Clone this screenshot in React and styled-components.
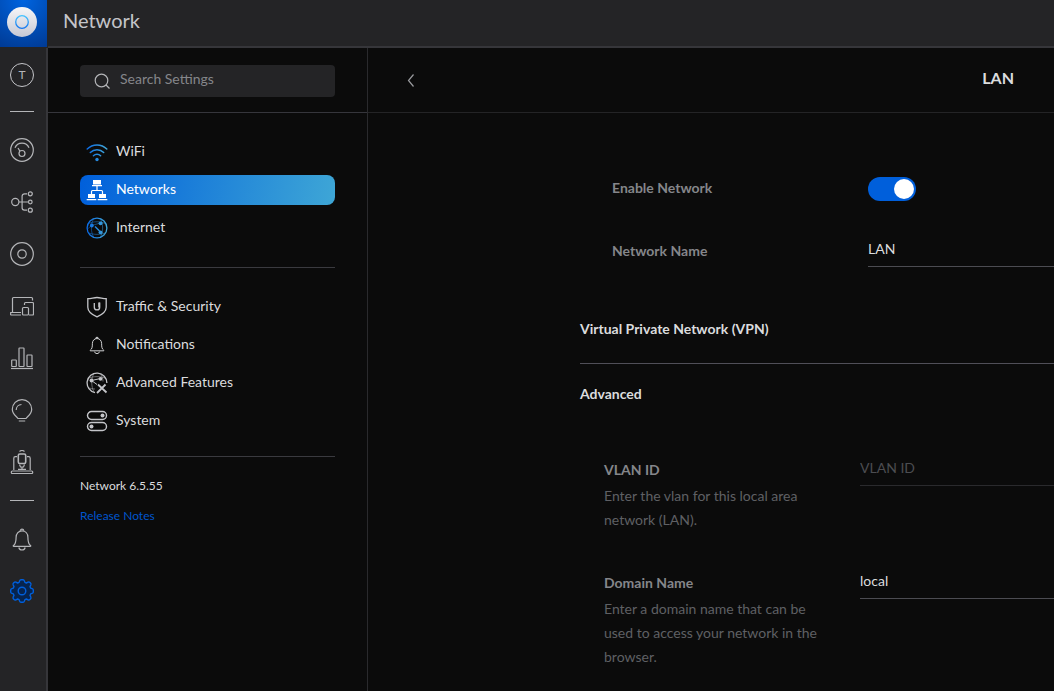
import React, { useState } from 'react';
import styled, { createGlobalStyle, css } from 'styled-components';

const GlobalStyle = createGlobalStyle`
  * {
    box-sizing: border-box;
  }

  body {
    margin: 0;
    background: #0b0b0b;
    color: #dbdcde;
    font-family: Lato, "Open Sans", sans-serif;
    font-size: 14px;
    line-height: 24px;
  }
`

const Page = styled.div`
  display: grid;
  grid-template-columns: 48px 1fr;
  grid-template-rows: 48px 1fr;
  min-height: 100vh;
`

const Brand = styled.a`
  display: flex;
  background: #242426;
`

const BrandTile = styled.span`
  display: flex;
  align-items: center;
  justify-content: center;
  width: 47px;
  height: 47px;
  padding-right: 3px;
  padding-bottom: 3px;
  background: radial-gradient(circle at 50% 0%, #0064e0, #003a94);
`

const TopBar = styled.header`
  display: flex;
  align-items: center;
  padding: 0 15px 6px;
  background: #242426;
  border-bottom: 2px solid #36363a;
`

const AppTitle = styled.h1`
  margin: 0;
  color: #c4c5c9;
  font-size: 20px;
  font-weight: normal;
`

const Rail = styled.nav`
  display: flex;
  flex-direction: column;
  align-items: center;
  padding: 3px 2px 0 0;
  background: #242426;
  border-right: 2px solid #36363a;
`

const RailButton = styled.button`
  display: flex;
  align-items: center;
  justify-content: center;
  width: 44px;
  height: ${props => (props.$short ? '48px' : '52px')};
  padding: 0;
  border: 0;
  background: none;
  color: ${props => (props.$active ? '#005fdb' : '#b4b5b8')};
  cursor: pointer;
`

const Avatar = styled.span`
  width: 24px;
  height: 24px;
  border: 1px solid #c4c5c9;
  border-radius: 50%;
  font-family: Lato, sans-serif;
  font-size: 12px;
  line-height: 22px;
  text-align: center;
`

const RailDivider = styled.hr`
  width: 24px;
  height: 1px;
  margin: 12px 0;
  border: 0;
  background: #b4b5b8;
`

const Body = styled.div`
  display: grid;
  grid-template-columns: 320px 1fr;
  min-width: 0;
`

const Side = styled.aside`
  border-right: 1px solid #2a2a2d;
`

const SearchRow = styled.div`
  height: 65px;
  padding: 17px 32px 0;
  border-bottom: 1px solid #36363c;
`

const SearchBox = styled.label`
  display: flex;
  align-items: center;
  gap: 10px;
  height: 32px;
  padding: 0 14px;
  border-radius: 4px;
  background: #242426;
  color: #b4b5b8;
`

const SearchInput = styled.input`
  flex: 1;
  min-width: 0;
  height: 28px;
  padding: 0 0 6px;
  border: 0;
  outline: 0;
  background: none;
  color: #dbdcde;
  font: inherit;

  &::placeholder {
    color: #85868a;
    opacity: 1;
  }
`

const Menu = styled.nav`
  display: flex;
  flex-direction: column;
  gap: 8px;
  padding: 24px 32px 0;
`

const MenuItem = styled.a`
  display: flex;
  align-items: center;
  gap: 8px;
  height: 30px;
  padding: 0 6px;
  border-radius: 8px;
  color: #dbdcde;
  text-decoration: none;

  ${props => props.$active && css`
    background: linear-gradient(100deg, #005fdb, #3ea6d6);
    color: #fff;
  `}
`

const MenuText = styled.span`
  padding-bottom: 2px;
`

const Divider = styled.hr`
  height: 1px;
  margin: ${props => props.$top} 32px 0;
  border: 0;
  background: #3a3a3f;
`

const Version = styled.div`
  display: flex;
  flex-direction: column;
  align-items: flex-start;
  padding: 14px 32px;
  font-size: 12px;
  line-height: 30px;
`

const ReleaseLink = styled.a`
  color: #0055cc;
  text-decoration: none;
`

const Main = styled.main`
  min-width: 0;
`

const MainHeader = styled.div`
  display: flex;
  align-items: center;
  justify-content: space-between;
  height: 65px;
  padding: 0 40px 4px 32px;
  border-bottom: 1px solid #242426;
`

const BackButton = styled.button`
  display: flex;
  padding: 4px 0 0;
  border: 0;
  background: none;
  color: #9a9b9f;
  cursor: pointer;
`

const PageTitle = styled.h2`
  margin: 0;
  font-size: 16px;
  font-weight: bold;
`

const Form = styled.form`
  padding: 55px 0 22px 212px;
`

const Fields = styled.div`
  display: flex;
  flex-direction: column;
  gap: ${props => props.$gap};
  padding-left: ${props => props.$indent};
`

const Field = styled.div`
  display: grid;
  grid-template-columns: 256px 1fr;
  align-items: start;
`

const FieldText = styled.div`
  padding: 8px 32px 0 0;
`

const Label = styled.label`
  display: block;
  color: #85868a;
  font-weight: bold;
`

const Hint = styled.p`
  margin: 2px 0 0;
  color: #5f6064;
`

const Input = styled.input`
  width: 100%;
  height: 36px;
  padding: 0;
  border: 0;
  border-bottom: 1px solid ${props => (props.$dim ? '#2a2a2d' : '#4c4c52')};
  border-radius: 0;
  outline: 0;
  background: none;
  color: #dbdcde;
  font: inherit;

  &::placeholder {
    color: #4c4d51;
    opacity: 1;
  }
`

const Switch = styled.input`
  appearance: none;
  display: flex;
  width: 48px;
  height: 24px;
  margin: 9px 0 0;
  padding: 2px;
  border-radius: 12px;
  background: ${props => (props.checked ? '#005fdb' : '#36363a')};
  justify-content: ${props => (props.checked ? 'flex-end' : 'flex-start')};
  cursor: pointer;

  &::before {
    content: '';
    width: 20px;
    height: 20px;
    border-radius: 50%;
    background: #fff;
  }
`

const SectionHead = styled.h3`
  margin: 0;
  font-size: 14px;
  font-weight: bold;
`

const VpnSection = styled.section`
  padding: 50px 0 22px;
  border-bottom: 1px solid #504f58;
`

const AdvancedSection = styled.section`
  padding-top: 18px;
`

const AdvancedHead = styled(SectionHead)`
  margin-bottom: 44px;
`

// shared outline look for every icon
const Svg = ({ size = 24, children, ...rest }) => (
  <svg width={size} height={size} viewBox={`0 0 ${size} ${size}`} fill="none" stroke="currentColor" strokeWidth="1.2" aria-hidden="true" {...rest}>
    {children}
  </svg>
)

const LogoIcon = () => (
  <Svg size={30} stroke="none">
    <defs>
      <linearGradient id="disc" x1="0" y1="0" x2="0" y2="1">
        <stop offset="0" stopColor="#f6f6f8" />
        <stop offset="1" stopColor="#c6c8d4" />
      </linearGradient>
      <linearGradient id="ring" x1="0" y1="0" x2="0" y2="1">
        <stop offset="0" stopColor="#45c3ff" />
        <stop offset="1" stopColor="#1476f0" />
      </linearGradient>
    </defs>
    <circle cx="15" cy="15" r="15" fill="url(#disc)" />
    <circle cx="15" cy="15" r="6.3" stroke="url(#ring)" strokeWidth="1.3" />
  </Svg>
)

const DashboardIcon = () => (
  <Svg>
    <circle cx="12" cy="12" r="11.3" />
    <path d="M5 9.800a7.600 7.600 0 0 1 14 0M8 10l2 3.300" />
    <circle cx="12" cy="15.500" r="3" />
  </Svg>
)

const TopologyIcon = () => (
  <Svg>
    <circle cx="5.300" cy="12" r="3.600" />
    <path d="M9 12h9M17 3.800h-2.500a2.400 2.400 0 0 0-2.400 2.400v11.600a2.400 2.400 0 0 0 2.400 2.400H17" />
    <circle cx="20.300" cy="3.800" r="2" />
    <circle cx="20.300" cy="12" r="1.800" />
    <circle cx="20.300" cy="20.200" r="2" />
  </Svg>
)

const DeviceIcon = () => (
  <Svg>
    <circle cx="12" cy="12" r="11.300" />
    <circle cx="12" cy="12" r="4.200" />
  </Svg>
)

const ClientsIcon = () => (
  <Svg>
    <path d="M2.500 18V4.500a1 1 0 0 1 1-1h18a1 1 0 0 1 1 1v2M11 18.500H.7v1a1 1 0 0 0 1 1.500H11" />
    <path d="M14.500 11V9.500a1 1 0 0 1 1-1h7a1 1 0 0 1 1 1v10.500a1 1 0 0 1-1 1H19" />
    <rect x="12.500" y="13.500" width="6" height="7.500" rx="1" />
  </Svg>
)

const StatsIcon = () => (
  <Svg>
    <rect x="1.700" y="14" width="4.600" height="6.500" rx=".5" />
    <rect x="9" y="2" width="5" height="18.500" rx=".5" />
    <rect x="17" y="9" width="5" height="11.500" rx=".5" />
    <path d="M1 22.500h22" />
  </Svg>
)

const BulbIcon = () => (
  <Svg>
    <path d="M8 20.500c-.8-1.700-5.700-4-5.700-9.200a9.700 9.700 0 0 1 19.400 0c0 5.200-4.900 7.500-5.700 9.200z" />
    <path d="M6.200 12A5.600 5.600 0 0 1 11.500 6.500M8.800 23h6.400" />
  </Svg>
)

const LegacyIcon = () => (
  <Svg>
    <path d="M9.500 1.500a3.500 3.500 0 0 1 5 0M3.800 20V8.200a1.500 1.500 0 0 1 1.500-1.500H7M20.200 20V8.200a1.500 1.500 0 0 0-1.500-1.500H17" />
    <rect x="8.300" y="4" width="7.400" height="9.500" rx="1.500" strokeWidth="1.600" />
    <path d="M9.500 14.500l1 2.500h3l1-2.500M12 17v2M8 19.300h8" />
    <rect x="1.300" y="21" width="21.400" height="2.500" rx="1" />
  </Svg>
)

const BellIcon = ({ viewBox = '0 0 24 24', size = 24 }) => (
  <Svg size={size} viewBox={viewBox}>
    <path d="M3.500 18.500c2.300-1.500 2.600-4 2.600-8.200 0-4 2.600-6.500 5.900-6.500s5.900 2.500 5.900 6.500c0 4.200.3 6.700 2.600 8.200.5.400.3.900-.2.900H3.700c-.5 0-.7-.5-.2-.9z" />
    <path d="M10.300 3.800a1.700 1.700 0 0 1 3.400 0M8.800 20.500a3.300 3.300 0 0 0 6.400 0" />
  </Svg>
)

const SmallBellIcon = () => <BellIcon size={22} viewBox="-2 -2 28 28" />

const GearIcon = () => (
  <Svg strokeWidth="1.400">
    <path
      fill="#06244f"
      strokeLinejoin="round"
      d="M9.600 1.900Q10 .7 11 .7h2q1 0 1.400 1.200l.5 1.500 1.500.6 1.600-.8q1.100-.5 1.900.3l.600.600q.8.800.3 1.900l-.8 1.600.6 1.500 1.500.5q1.200.4 1.200 1.400v2q0 1-1.200 1.400l-1.500.5-.6 1.500.8 1.600q.5 1.100-.3 1.900l-.6.6q-.8.8-1.900.3l-1.600-.8-1.500.6-.5 1.500Q14 23.300 13 23.300h-2q-1 0-1.400-1.200l-.5-1.500-1.500-.6-1.600.8q-1.100.5-1.900-.3l-.6-.6q-.8-.8-.3-1.900l.8-1.600-.6-1.500-1.500-.5Q.7 14 .7 13v-2q0-1 1.200-1.400l1.500-.5.6-1.500-.8-1.600q-.5-1.100.3-1.900l.6-.6q.8-.8 1.900-.3l1.600.8 1.500-.6z"
    />
    <circle cx="12" cy="12" r="3.800" />
  </Svg>
)

const SearchIcon = () => (
  <Svg size={16}>
    <circle cx="7.500" cy="7.500" r="6.300" />
    <path d="M12 12l3.500 3.500" />
  </Svg>
)

const WifiIcon = () => (
  <Svg size={22} stroke="url(#wifi)" strokeWidth="1.500" strokeLinecap="round">
    <defs>
      <linearGradient id="wifi" gradientUnits="userSpaceOnUse" x1="1" y1="0" x2="21" y2="0">
        <stop offset="0" stopColor="#0a6be6" />
        <stop offset="1" stopColor="#43a9d8" />
      </linearGradient>
    </defs>
    <path d="M1.200 8a13.800 13.800 0 0 1 19.600 0M4.300 11.500a9.500 9.500 0 0 1 13.400 0M7.400 14.800a5.100 5.100 0 0 1 7.200 0" />
    <circle cx="11" cy="18.500" r="1.700" fill="url(#wifi)" stroke="none" />
  </Svg>
)

const NetworksIcon = () => (
  <Svg size={22}>
    <g fill="currentColor" stroke="none">
      <rect x="7" y="1" width="8" height="4.500" />
      <path d="M6 6h10v1.200H6zM2 15h7v4H2zM13 15h7v4h-7zM.7 20h9.600v1.200H.7zM11.700 20h9.600v1.200h-9.600z" />
    </g>
    <path d="M11 7v4.500M5.500 15v-2.500a1 1 0 0 1 1-1h9a1 1 0 0 1 1 1V15" />
  </Svg>
)

const InternetIcon = () => (
  <Svg size={22} stroke="url(#net)">
    <defs>
      <linearGradient id="net" gradientUnits="userSpaceOnUse" x1="1" y1="0" x2="21" y2="0">
        <stop offset="0" stopColor="#0a6be6" />
        <stop offset="1" stopColor="#43a9d8" />
      </linearGradient>
    </defs>
    <circle cx="11" cy="11" r="9.900" strokeWidth="1.300" />
    <path strokeWidth=".5" d="M2 7c5-3 13-3 18 0M2 15.500c5 2.500 13 2.500 18 0M8 1.500C4.500 6 4.500 16 8 20.500M14 1.500c3.500 4.500 3.500 14.500 0 19M5.500 8.500l9-2.500M1.500 12l4-3.500" />
    <path strokeWidth="1.400" d="M9 9.500l4.500 4.500" />
    <g fill="url(#net)" stroke="none">
      <circle cx="5.800" cy="8.500" r="1.900" />
      <circle cx="14.500" cy="6.300" r="1.900" />
      <circle cx="14.500" cy="15.300" r="1.900" />
    </g>
  </Svg>
)

const ShieldIcon = () => (
  <Svg size={22} strokeWidth="1.300" stroke="#c4c5c9">
    <path d="M1.800 2.700c3.500 0 6-1.200 9.200-1.200s5.700 1.200 9.200 1.200v8.500c0 4.600-5 7.800-9.200 9.700-4.200-1.900-9.200-5.100-9.200-9.700z" />
    <path strokeWidth="1.300" d="M8.300 7v4.200a2.700 2.700 0 0 0 5.400 0V6.500" />
    <path strokeWidth="1.600" d="M13 6.500v5" />
  </Svg>
)

const AdvancedIcon = () => (
  <Svg size={22} color="#c4c5c9">
    <path d="M9 20.700A9.900 9.900 0 1 1 20.900 11" strokeWidth="1.300" />
    <path strokeWidth=".5" d="M2 6.500c5-2.500 13-2.500 18 0M8 1.500C5 6 5 15 8 20M14 1.500c2 2.500 3 5 3 8M2 15.500c2 1 5 1.500 7 1.500" />
    <path strokeWidth="1" d="M5.500 8.500l9-2M5.500 8.500l5.500 4" />
    <circle cx="5.500" cy="8.500" r="1.900" fill="currentColor" stroke="none" />
    <circle cx="14.500" cy="6.800" r="1.900" fill="currentColor" stroke="none" />
    <path strokeWidth="1.800" d="M12 12.500l8.500 8M19.500 12.500l-8.500 8.500" />
  </Svg>
)

const SystemIcon = () => (
  <Svg size={22} strokeWidth="1.400" color="#c4c5c9">
    <rect x="1.500" y="1.500" width="19" height="8" rx="4" />
    <rect x="1.500" y="12.500" width="19" height="8" rx="4" />
    <circle cx="16.500" cy="5.500" r="2" fill="currentColor" stroke="none" />
    <circle cx="5.500" cy="16.500" r="2" fill="currentColor" stroke="none" />
  </Svg>
)

const railItems = [
  ['Dashboard', DashboardIcon],
  ['Topology', TopologyIcon],
  ['UniFi Devices', DeviceIcon],
  ['Client Devices', ClientsIcon],
  ['Statistics', StatsIcon],
  ['Insights', BulbIcon],
  ['Hotspot', LegacyIcon],
]

const mainItems = [
  ['WiFi', WifiIcon],
  ['Networks', NetworksIcon],
  ['Internet', InternetIcon],
]

const otherItems = [
  ['Traffic & Security', ShieldIcon],
  ['Notifications', SmallBellIcon],
  ['Advanced Features', AdvancedIcon],
  ['System', SystemIcon],
]

const MenuGroup = ({ items, active }) => (
  <Menu>
    {items.map(([name, Icon]) => (
      <MenuItem key={name} href="#" $active={name === active}>
        <Icon />
        <MenuText>{name}</MenuText>
      </MenuItem>
    ))}
  </Menu>
)

function App() {
  const [enabled, setEnabled] = useState(true)
  const [name, setName] = useState('LAN')
  const [vlan, setVlan] = useState('')
  const [domain, setDomain] = useState('local')

  return (
    <>
      <GlobalStyle />
      <Page>
        <Brand href="#" aria-label="Home">
          <BrandTile><LogoIcon /></BrandTile>
        </Brand>
        <TopBar>
          <AppTitle>Network</AppTitle>
        </TopBar>
        <Rail>
          <RailButton $short><Avatar>T</Avatar></RailButton>
          <RailDivider />
          {railItems.map(([label, Icon]) => (
            <RailButton key={label} aria-label={label}><Icon /></RailButton>
          ))}
          <RailDivider />
          <RailButton aria-label="Alerts"><BellIcon /></RailButton>
          <RailButton aria-label="Settings" $active><GearIcon /></RailButton>
        </Rail>
        <Body>
          <Side>
            <SearchRow>
              <SearchBox>
                <SearchIcon />
                <SearchInput type="text" placeholder="Search Settings" aria-label="Search Settings" />
              </SearchBox>
            </SearchRow>
            <MenuGroup items={mainItems} active="Networks" />
            <Divider $top="24px" />
            <MenuGroup items={otherItems} />
            <Divider $top="20px" />
            <Version>
              <span>Network 6.5.55</span>
              <ReleaseLink href="#">Release Notes</ReleaseLink>
            </Version>
          </Side>
          <Main>
            <MainHeader>
              <BackButton aria-label="Back">
                <Svg size={20}><path d="M13.500 4.500L8.500 10.500l5 6" /></Svg>
              </BackButton>
              <PageTitle>LAN</PageTitle>
            </MainHeader>
            <Form>
              <Fields $indent="32px" $gap="30px">
                <Field>
                  <FieldText><Label htmlFor="enabled">Enable Network</Label></FieldText>
                  <Switch id="enabled" type="checkbox" checked={enabled} onChange={e => setEnabled(e.target.checked)} />
                </Field>
                <Field>
                  <FieldText><Label htmlFor="name">Network Name</Label></FieldText>
                  <Input id="name" value={name} onChange={e => setName(e.target.value)} />
                </Field>
              </Fields>
              <VpnSection>
                <SectionHead>Virtual Private Network (VPN)</SectionHead>
              </VpnSection>
              <AdvancedSection>
                <AdvancedHead>Advanced</AdvancedHead>
                <Fields $indent="24px" $gap="31px">
                  <Field>
                    <FieldText>
                      <Label htmlFor="vlan">VLAN ID</Label>
                      <Hint>Enter the vlan for this local area network (LAN).</Hint>
                    </FieldText>
                    <Input id="vlan" placeholder="VLAN ID" $dim value={vlan} onChange={e => setVlan(e.target.value)} />
                  </Field>
                  <Field>
                    <FieldText>
                      <Label htmlFor="domain">Domain Name</Label>
                      <Hint>Enter a domain name that can be used to access your network in the browser.</Hint>
                    </FieldText>
                    <Input id="domain" value={domain} onChange={e => setDomain(e.target.value)} />
                  </Field>
                </Fields>
              </AdvancedSection>
            </Form>
          </Main>
        </Body>
      </Page>
    </>
  )
}

export default App;
